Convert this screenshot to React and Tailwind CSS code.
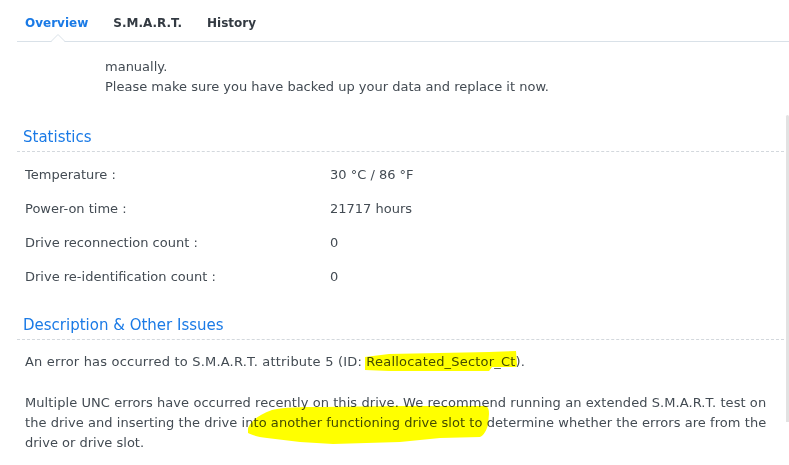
import React from 'react';

const font = { fontFamily: '"DejaVu Sans", Verdana, sans-serif' };

const stats = [
  ['Temperature :', '30 °C / 86 °F'],
  ['Power-on time :', '21717 hours'],
  ['Drive reconnection count :', '0'],
  ['Drive re-identification count :', '0'],
];

function Tabs() {
  return (
    <div className="relative ml-[17px] h-[42px] border-b border-[#d9e1e8] flex items-center pt-[4px] pl-2 gap-[25px] text-[12px] font-bold">
      <span className="text-[#1a7ae6]">Overview</span>
      <span className="text-[#333a42]">S.M.A.R.T.</span>
      <span className="text-[#333a42]">History</span>
      {/* little notch under the active tab */}
      <svg className="absolute left-[34px] bottom-[-1px]" width="14" height="8" viewBox="0 0 14 8">
        <path d="M0 7.5 L7 0.5 L14 7.5" fill="#ffffff" stroke="#d9e1e8" strokeWidth="1" />
        <rect x="1" y="7" width="12" height="1" fill="#ffffff" />
      </svg>
    </div>
  );
}

function SectionTitle({ children }) {
  return (
    <div className="ml-[17px] h-[27px] border-b border-dashed border-[#d3d8dd] pl-[6px] text-[15px] leading-[24px] text-[#1a7ae6]">
      {children}
    </div>
  );
}

export default function App() {
  return (
    <div className="relative w-[789px] h-[465px] overflow-hidden bg-white text-[#434b53]" style={font}>
      <Tabs />

      <div className="mt-[15px] pl-[105px] text-[13px] leading-[20px]">
        <div>manually.</div>
        <div>Please make sure you have backed up your data and replace it now.</div>
      </div>

      <div className="mt-[28px]">
        <SectionTitle>Statistics</SectionTitle>
        <div className="mt-[6px] text-[13px]">
          {stats.map(([label, value]) => (
            <div key={label} className="h-[34px] flex items-center pl-[25px]">
              <span className="w-[305px]">{label}</span>
              <span>{value}</span>
            </div>
          ))}
        </div>
      </div>

      <div className="mt-[19px]">
        <SectionTitle>Description &amp; Other Issues</SectionTitle>
        <div className="pl-[25px] text-[13px] leading-[20px]">
          <div className="mt-[12px] tracking-[0.2px]">An error has occurred to S.M.A.R.T. attribute 5 (ID: Reallocated_Sector_Ct).</div>
          <div className="mt-[21px]">
            <div className="tracking-[0.07px]">Multiple UNC errors have occurred recently on this drive. We recommend running an extended S.M.A.R.T. test on</div>
            <div className="tracking-[0.05px]">the drive and inserting the drive into another functioning drive slot to determine whether the errors are from the</div>
            <div>drive or drive slot.</div>
          </div>
        </div>
      </div>

      {/* marker highlights drawn over the text */}
      <svg className="absolute inset-0 pointer-events-none mix-blend-multiply" width="789" height="465">
        <path
          d="M365 357 L389 354 L489 352 L516 351 L517 365 L516 367 L492 367 L489 371 L389 371 L365 370 Z"
          fill="#ffff00"
        />
        <path
          d="M248 428 C251 421 258 415 272 410 C285 407 300 407 320 407 L400 406 L486 406 C489 408 489 411 489 414 L488 425 C486 431 484 435 480 437 L440 438 L400 442 L333 444 L300 442 L267 438 C258 437 252 435 248 433 Z"
          fill="#ffff00"
        />
      </svg>

      {/* scrollbar */}
      <div className="absolute right-0 top-[115px] w-[3px] h-[307px] rounded-t-[2px] bg-[#e2e2e2]" />
    </div>
  );
}
